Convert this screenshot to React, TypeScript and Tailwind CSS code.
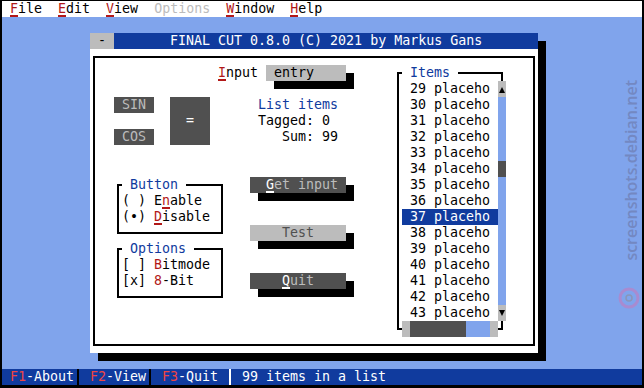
import React from "react";

function Hk({ children, className = "text-[#b21818] border-[#b21818]" }: { children: React.ReactNode; className?: string }) {
  return <span className={`inline-block h-4 border-b-2 ${className}`}>{children}</span>;
}

function MenuBar() {
  const items = [
    { hk: "F", rest: "ile" },
    { hk: "E", rest: "dit" },
    { hk: "V", rest: "iew" },
    { hk: "", rest: "Options", off: true },
    { hk: "W", rest: "indow" },
    { hk: "H", rest: "elp" },
  ];
  return (
    <div className="flex h-4 bg-white text-black">
      {items.map((m) => (
        <span key={m.rest} className={`whitespace-pre px-2 ${m.off ? "text-[#bcbcbc]" : ""}`}>
          {m.hk && <Hk>{m.hk}</Hk>}
          {m.rest}
        </span>
      ))}
    </div>
  );
}

function Frame() {
  return <div className="absolute bottom-[7px] left-[3px] right-[3px] top-[7px] border-2 border-black" />;
}

function Group({ title, children }: { title: string; children: React.ReactNode }) {
  return (
    <div className="relative h-16 w-28">
      <Frame />
      <span className="absolute left-2 top-0 bg-white px-2 text-[#103b9e]">{title}</span>
      <div className="relative flex flex-col whitespace-pre pl-2 pt-4">{children}</div>
    </div>
  );
}

function Button({ children, off, pad }: { children: React.ReactNode; off?: boolean; pad: string }) {
  return (
    <div
      className={`h-4 w-24 whitespace-pre shadow-[8px_8px_0_0_#000] ${pad} ${
        off ? "bg-[#bcbcbc] text-[#505050]" : "bg-[#505050] text-[#bcbcbc]"
      }`}
    >
      {children}
    </div>
  );
}

function Arrow({ up }: { up?: boolean }) {
  return (
    <div className="h-4 w-2 bg-[#bcbcbc]">
      <svg width="8" height="16" viewBox="0 0 8 16">
        {up ? <polygon points="1,12 4,6 7,12" fill="#000" /> : <polygon points="1,5 7,5 4,11" fill="#000" />}
      </svg>
    </div>
  );
}

function ItemsList() {
  const items = Array.from({ length: 15 }, (_, i) => 29 + i);
  return (
    <div className="relative mt-4 h-[272px] w-28">
      <Frame />
      <span className="absolute left-2 top-0 bg-white px-2 text-[#103b9e]">Items</span>
      <div className="relative flex pl-2 pt-4">
        <div className="flex w-24 flex-col bg-white">
          {items.map((n) => (
            <div key={n} className={`h-4 whitespace-pre pl-2 ${n === 37 ? "bg-[#103b9e] text-white" : ""}`}>
              {n} placeho
            </div>
          ))}
        </div>
        <div className="flex w-2 flex-col">
          <Arrow up />
          <div className="h-16 bg-[#80a4ec]" />
          <div className="h-4 bg-[#505050]" />
          <div className="h-32 bg-[#80a4ec]" />
          <Arrow />
        </div>
      </div>
      <div className="relative ml-2 flex h-4 w-24">
        <div className="w-2 bg-[#bcbcbc]" />
        <div className="w-14 bg-[#505050]" />
        <div className="w-6 bg-[#80a4ec]" />
        <div className="w-2 bg-[#bcbcbc]" />
      </div>
    </div>
  );
}

function Dialog() {
  return (
    <div className="w-[448px] shadow-[8px_8px_0_0_#000]">
      <div className="flex h-4">
        <div className="w-6 bg-[#bcbcbc] text-center text-black">-</div>
        <div className="flex-1 whitespace-pre bg-[#103b9e] pl-14 text-white">FINAL CUT 0.8.0 (C) 2021 by Markus Gans</div>
      </div>
      <div className="relative flex h-[304px] bg-white">
        <Frame />
        <div className="relative flex w-[304px] flex-col pt-4">
          <div className="flex h-4 pl-32">
            <span className="w-12">
              <Hk>I</Hk>nput
            </span>
            <span className="w-20 whitespace-pre bg-[#bcbcbc] shadow-[8px_8px_0_0_#000]"> entry</span>
          </div>
          <div className="mt-4 flex h-12 pl-6">
            <div className="flex w-10 flex-col justify-between">
              <div className="h-4 bg-[#505050] text-center text-[#bcbcbc]">SIN</div>
              <div className="h-4 bg-[#505050] text-center text-[#bcbcbc]">COS</div>
            </div>
            <div className="ml-4 flex h-12 w-10 items-center justify-center bg-[#505050] text-white">=</div>
            <div className="ml-12 flex flex-col whitespace-pre">
              <span className="text-[#103b9e]">List items</span>
              <span>Tagged: 0</span>
              <span>   Sum: 99</span>
            </div>
          </div>
          <div className="mt-8 flex pl-6">
            <div className="flex w-28 flex-col">
              <Group title="Button">
                <span>
                  ( ) E<Hk>n</Hk>able
                </span>
                <span>
                  (•) <Hk>D</Hk>isable
                </span>
              </Group>
              <Group title="Options">
                <span>
                  [ ] <span className="text-[#b21818]">B</span>itmode
                </span>
                <span>
                  [x] <span className="text-[#b21818]">8</span>-Bit
                </span>
              </Group>
            </div>
            <div className="ml-6 flex flex-col gap-8">
              <Button pad="pl-4">
                <Hk className="border-white text-white">G</Hk>et input
              </Button>
              <Button pad="pl-8" off>
                Test
              </Button>
              <Button pad="pl-8">
                <Hk className="border-white text-white">Q</Hk>uit
              </Button>
            </div>
          </div>
        </div>
        <ItemsList />
      </div>
    </div>
  );
}

function Sep({ light }: { light?: boolean }) {
  return (
    <span className="flex w-2 justify-center">
      <span className={`w-0.5 ${light ? "bg-white" : "bg-black"}`} />
    </span>
  );
}

function StatusBar() {
  return (
    <div className="flex h-4 whitespace-pre bg-[#103b9e] text-white">
      <span className="w-[72px] pl-2">
        <span className="text-[#ee4444]">F1</span>-About
      </span>
      <Sep />
      <span className="w-16 pl-2">
        <span className="text-[#ee4444]">F2</span>-View
      </span>
      <Sep />
      <span className="w-[72px] pl-2">
        <span className="text-[#ee4444]">F3</span>-Quit
      </span>
      <Sep light />
      <span className="pl-2">99 items in a list</span>
    </div>
  );
}

export default function App() {
  return (
    <div className="relative h-[388px] w-[644px] overflow-hidden bg-black pl-[2px] pt-[1px] font-['DejaVu_Sans_Mono',monospace] text-[13.3px] leading-4">
      <div className="flex h-[384px] w-[640px] flex-col bg-[#80a4ec] text-black">
        <MenuBar />
        <div className="flex-1 pl-[88px] pt-4">
          <Dialog />
        </div>
        <StatusBar />
      </div>
      <div className="absolute left-[621px] top-[80px] rotate-180 font-['Open_Sans',sans-serif] text-[16px] font-semibold leading-[20px] text-[#7388c2] [writing-mode:vertical-rl]">
        screenshots.debian.net
      </div>
      <svg className="absolute left-[617px] top-[286px]" width="24" height="24" viewBox="0 0 24 24">
        <circle cx="12" cy="12" r="9" fill="none" stroke="#a88bd0" strokeWidth="3" />
        <circle cx="12" cy="12" r="3" fill="none" stroke="#8a96b8" strokeWidth="1.5" />
      </svg>
    </div>
  );
}
